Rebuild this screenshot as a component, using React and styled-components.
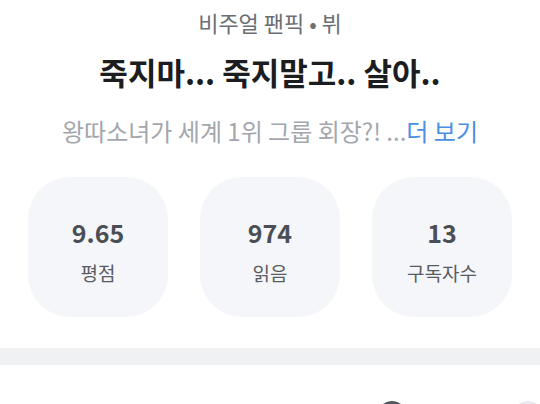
import styled, { createGlobalStyle } from 'styled-components';

const GlobalStyle = createGlobalStyle`
  body {
    margin: 0;
    background: #ffffff;
    font-family: 'Noto Sans CJK KR', 'Noto Sans', sans-serif;
    overflow: hidden;
  }
`;

const Page = styled.div`
  width: 540px;
  height: 404px;
  overflow: hidden;
  background: #ffffff;
`;

const Header = styled.header`
  display: flex;
  flex-direction: column;
  align-items: center;
  padding-top: 8px;
  text-align: center;
`;

const Genre = styled.div`
  font-size: 22px;
  line-height: 28px;
  color: #6b6e73;
`;

const Title = styled.h1`
  margin: 16px 0 0;
  font-size: 31px;
  line-height: 40px;
  font-weight: 700;
  color: #1c1d20;
`;

const Description = styled.p`
  margin: 25px 0 0;
  font-size: 24px;
  line-height: 28px;
  color: #a3a7ad;
  white-space: nowrap;
`;

const More = styled.span`
  color: #4a8fe0;
`;

const Stats = styled.div`
  display: grid;
  grid-template-columns: repeat(3, 140px);
  justify-content: center;
  column-gap: 32px;
  margin-top: 32px;
`;

const StatCard = styled.div`
  height: 140px;
  border-radius: 42px;
  background: #f5f6f9;
  display: flex;
  flex-direction: column;
  align-items: center;
  padding-top: 40px;
  box-sizing: border-box;
`;

const StatValue = styled.div`
  font-size: 25px;
  line-height: 30px;
  font-weight: 700;
  color: #4a4e55;
`;

const StatLabel = styled.div`
  margin-top: 13px;
  font-size: 19px;
  line-height: 26px;
  color: #585b61;
`;

const Divider = styled.div`
  height: 17px;
  margin-top: 31px;
  background: #f0f1f3;
`;

const NextSection = styled.div`
  display: flex;
  justify-content: flex-end;
  gap: 106px;
  padding: 36px 0 0;
  margin-right: -3px;
`;

const Dot = styled.span`
  display: block;
  width: 30px;
  height: 30px;
  border-radius: 50%;
  background: ${(props) => (props.dark ? '#50555d' : '#e7e8eb')};
  flex-shrink: 0;
`;

const stats = [
  { value: '9.65', label: '평점' },
  { value: '974', label: '읽음' },
  { value: '13', label: '구독자수' },
];

export default function App() {
  return (
    <Page>
      <GlobalStyle />
      <Header>
        <Genre>비주얼 팬픽 • 뷔</Genre>
        <Title>죽지마... 죽지말고.. 살아..</Title>
        <Description>
          왕따소녀가 세계 1위 그룹 회장?! ...<More>더 보기</More>
        </Description>
      </Header>
      <Stats>
        {stats.map((s) => (
          <StatCard key={s.label}>
            <StatValue>{s.value}</StatValue>
            <StatLabel>{s.label}</StatLabel>
          </StatCard>
        ))}
      </Stats>
      <Divider />
      <NextSection>
        <Dot dark />
        <Dot />
      </NextSection>
    </Page>
  );
}
